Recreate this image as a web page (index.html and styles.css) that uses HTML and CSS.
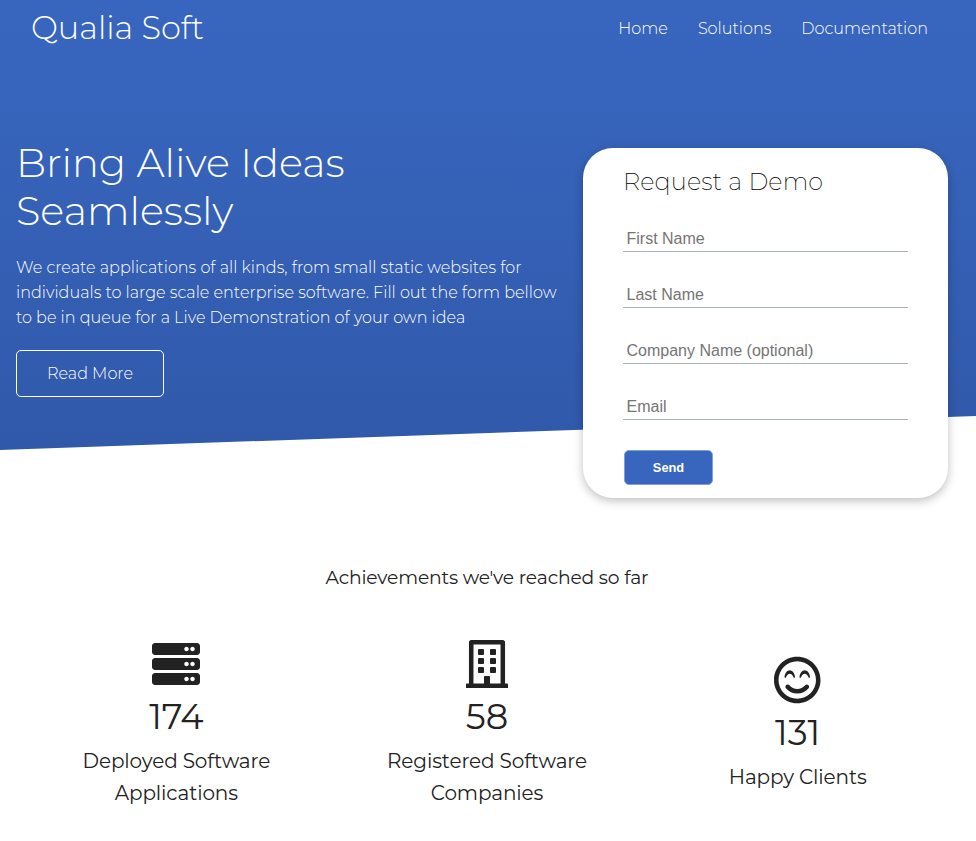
FILE: index.html
```html
<!DOCTYPE html>
<html lang="en">
<head>
<meta charset="utf-8">
<title>Qualia Soft</title>
<link rel="stylesheet" href="styles.css">
</head>
<body>
<header class="hero">
  <nav class="navbar">
    <a class="logo">Qualia Soft</a>
    <ul class="menu">
      <li>Home</li>
      <li>Solutions</li>
      <li>Documentation</li>
    </ul>
  </nav>
  <div class="content">
    <section class="intro">
      <h1>Bring Alive Ideas<br>Seamlessly</h1>
      <p>We create applications of all kinds, from small static websites for<br>individuals to large scale enterprise software. Fill out the form bellow<br>to be in queue for a Live Demonstration of your own idea</p>
      <a class="more">Read More</a>
    </section>
    <form class="card">
      <h2>Request a Demo</h2>
      <input type="text" placeholder="First Name">
      <input type="text" placeholder="Last Name">
      <input type="text" placeholder="Company Name (optional)">
      <input type="text" placeholder="Email">
      <button type="button">Send</button>
    </form>
  </div>
</header>
<main class="achievements">
  <h3>Achievements we've reached so far</h3>
  <div class="stats">
    <div class="stat">
      <svg width="48" height="48" viewBox="0 0 512 512"><path d="M480 160H32c-17.673 0-32-14.327-32-32V64c0-17.673 14.327-32 32-32h448c17.673 0 32 14.327 32 32v64c0 17.673-14.327 32-32 32zm-48-88c-13.255 0-24 10.745-24 24s10.745 24 24 24 24-10.745 24-24-10.745-24-24-24zm-64 0c-13.255 0-24 10.745-24 24s10.745 24 24 24 24-10.745 24-24-10.745-24-24-24zm112 248H32c-17.673 0-32-14.327-32-32v-64c0-17.673 14.327-32 32-32h448c17.673 0 32 14.327 32 32v64c0 17.673-14.327 32-32 32zm-48-88c-13.255 0-24 10.745-24 24s10.745 24 24 24 24-10.745 24-24-10.745-24-24-24zm-64 0c-13.255 0-24 10.745-24 24s10.745 24 24 24 24-10.745 24-24-10.745-24-24-24zm112 248H32c-17.673 0-32-14.327-32-32v-64c0-17.673 14.327-32 32-32h448c17.673 0 32 14.327 32 32v64c0 17.673-14.327 32-32 32zm-48-88c-13.255 0-24 10.745-24 24s10.745 24 24 24 24-10.745 24-24-10.745-24-24-24zm-64 0c-13.255 0-24 10.745-24 24s10.745 24 24 24 24-10.745 24-24-10.745-24-24-24z"/></svg>
      <div class="number">174</div>
      <div class="label">Deployed Software<br>Applications</div>
    </div>
    <div class="stat">
      <svg width="42" height="48" viewBox="0 0 448 512"><path d="M128 148v-40c0-6.600 5.400-12 12-12h40c6.600 0 12 5.400 12 12v40c0 6.600-5.400 12-12 12h-40c-6.600 0-12-5.400-12-12zm140 12h40c6.600 0 12-5.400 12-12v-40c0-6.600-5.400-12-12-12h-40c-6.600 0-12 5.400-12 12v40c0 6.600 5.400 12 12 12zm-128 96h40c6.600 0 12-5.400 12-12v-40c0-6.600-5.400-12-12-12h-40c-6.600 0-12 5.400-12 12v40c0 6.600 5.400 12 12 12zm128 0h40c6.600 0 12-5.400 12-12v-40c0-6.600-5.400-12-12-12h-40c-6.600 0-12 5.400-12 12v40c0 6.600 5.400 12 12 12zm-76 84v-40c0-6.600-5.400-12-12-12h-40c-6.600 0-12 5.400-12 12v40c0 6.600 5.400 12 12 12h40c6.600 0 12-5.400 12-12zm76 12h40c6.600 0 12-5.400 12-12v-40c0-6.600-5.400-12-12-12h-40c-6.600 0-12 5.400-12 12v40c0 6.600 5.400 12 12 12zm180 124v36H0v-36c0-6.600 5.400-12 12-12h19.500V24c0-13.300 10.700-24 24-24h337c13.300 0 24 10.700 24 24v440H436c6.600 0 12 5.400 12 12zM79.500 463H192v-67c0-6.600 5.400-12 12-12h40c6.600 0 12 5.400 12 12v67h112.500V49L80 48l-.5 415z"/></svg>
      <div class="number">58</div>
      <div class="label">Registered Software<br>Companies</div>
    </div>
    <div class="stat">
      <svg width="46.5" height="48" viewBox="0 0 496 512"><path d="M248 8C111 8 0 119 0 256s111 248 248 248 248-111 248-248S385 8 248 8zm0 448c-110.300 0-200-89.700-200-200S137.700 56 248 56s200 89.700 200 200-89.700 200-200 200zm84-143.400c-20.800 25-51.500 39.400-84 39.400s-63.200-14.300-84-39.400c-8.500-10.200-23.600-11.500-33.800-3.100-10.200 8.500-11.500 23.600-3.100 33.800 30 36 74.100 56.600 120.900 56.600s90.900-20.600 120.900-56.600c8.500-10.200 7.100-25.300-3.100-33.800-10.200-8.400-25.300-7.100-33.800 3.100zM136.500 211c7.700-13.700 19.200-21.600 31.500-21.600s23.800 7.900 31.500 21.600l9.500 17c2.100 3.700 6.200 4.700 9.300 3.700 3.600-1.100 6-4.500 5.700-8.300-3.300-42.100-32.200-71.400-56-71.400s-52.700 29.300-56 71.400c-.3 3.700 2.100 7.200 5.700 8.300 3.400 1.100 7.400-.5 9.300-3.700l9.500-17zM328 152c-23.800 0-52.700 29.300-56 71.400-.3 3.700 2.100 7.200 5.700 8.300 3.500 1.100 7.400-.5 9.300-3.700l9.500-17c7.700-13.700 19.200-21.600 31.500-21.600s23.800 7.900 31.500 21.600l9.500 17c2.100 3.700 6.200 4.700 9.300 3.700 3.600-1.100 6-4.500 5.700-8.300-3.300-42.100-32.200-71.400-56-71.400z"/></svg>
      <div class="number">131</div>
      <div class="label">Happy Clients</div>
    </div>
  </div>
</main>
</body>
</html>
```
FILE: styles.css
```css
* { box-sizing: border-box; margin: 0; padding: 0; }
body {
  font-family: Montserrat, Inter, "Open Sans", sans-serif;
  font-size: 16px;
  color: #222;
  background: #fff;
  overflow: hidden;
}
.hero { position: relative; height: 450px; color: #fff; }
.hero::before {
  content: "";
  position: absolute;
  inset: 0;
  z-index: -1;
  background: linear-gradient(#3866be 0%, #3764bc 22%, #3059aa 100%);
  clip-path: polygon(0 0, 100% 0, 100% 416px, 0 100%);
}
.navbar {
  height: 56px;
  padding: 0 48px 0 31px;
  display: flex;
  align-items: center;
  justify-content: space-between;
}
.logo { padding-bottom: 2px; font-size: 32px; font-weight: 300; }
.menu { display: flex; gap: 30px; list-style: none; font-weight: 300; }
.content {
  display: flex;
  justify-content: space-between;
  align-items: flex-start;
  padding: 83px 28px 0 16px;
}
h1 { font-size: 40px; line-height: 48px; font-weight: 300; }
.intro p { margin-top: 20px; line-height: 25px; font-weight: 300; letter-spacing: 0.01px; white-space: nowrap; }
.more {
  display: flex;
  align-items: center;
  justify-content: center;
  width: 148px;
  height: 47px;
  margin-top: 20px;
  border: 1px solid #fff;
  border-radius: 5px;
  font-weight: 300;
}
.card {
  width: 365px;
  height: 350px;
  margin-top: 9px;
  padding: 19px 40px 0;
  background: #fff;
  border-radius: 30px;
  box-shadow: 0 3px 10px rgba(0, 0, 0, 0.25);
}
h2 { margin: 0 0 27px; font-size: 24px; line-height: 30px; font-weight: 200; letter-spacing: 0.1px; color: #000; }
input {
  display: block;
  width: 285px;
  height: 28px;
  margin-bottom: 28px;
  padding: 2px 3px 0 3.5px;
  border: 0;
  border-bottom: 1px solid #adb5bd;
  background: transparent;
  font: 16px "Liberation Sans", Arial, sans-serif;
}
input::placeholder { color: #757575; }
button {
  display: block;
  width: 89px;
  height: 35px;
  margin: 30px 0 0 1px;
  border: 1px solid #7ba0e0;
  border-radius: 5px;
  background: #3866be;
  color: #fff;
  font: bold 12.8px "Liberation Sans", Arial, sans-serif;
}
.achievements { padding: 116px 22px 0; }
h3 { text-align: center; font-size: 18.72px; line-height: 24px; font-weight: 400; letter-spacing: -0.14px; margin-right: 2px; }
.stats { display: flex; align-items: center; margin: 50px 1px 0 -1px; }
.stat { flex: 1; display: flex; flex-direction: column; align-items: center; text-align: center; }
.stat svg { display: block; fill: #222; }
.number { font-size: 35.2px; line-height: 57px; }
.label { font-size: 20px; line-height: 32px; letter-spacing: -0.12px; }
```
